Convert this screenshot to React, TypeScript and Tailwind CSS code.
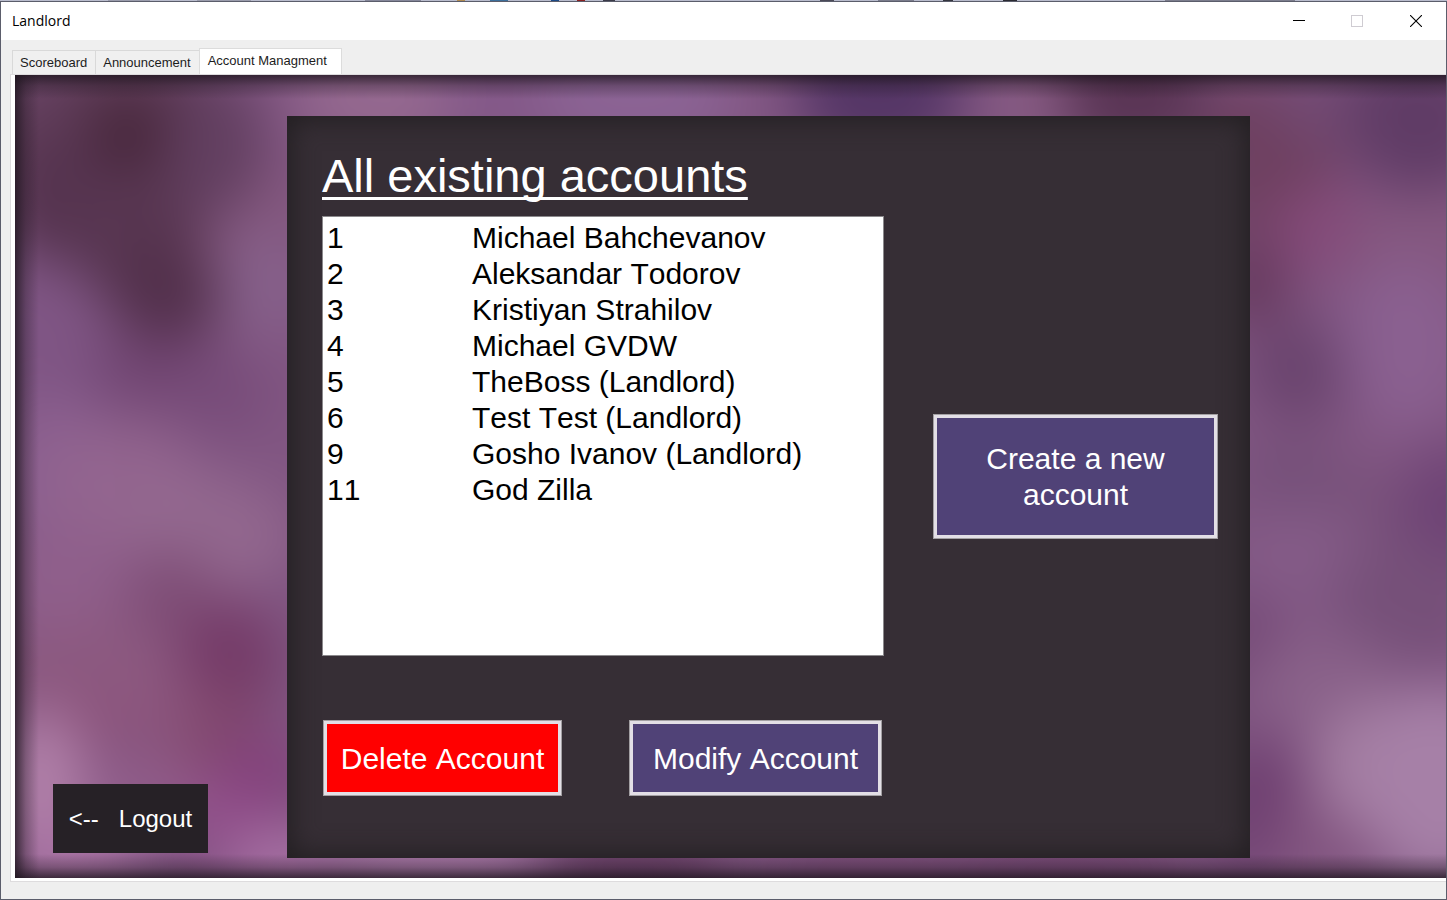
import React, { useState } from "react";

type Account = { id: number; name: string };

const accounts: Account[] = [
  { id: 1, name: "Michael Bahchevanov" },
  { id: 2, name: "Aleksandar Todorov" },
  { id: 3, name: "Kristiyan Strahilov" },
  { id: 4, name: "Michael GVDW" },
  { id: 5, name: "TheBoss (Landlord)" },
  { id: 6, name: "Test Test (Landlord)" },
  { id: 9, name: "Gosho Ivanov (Landlord)" },
  { id: 11, name: "God Zilla" },
];

const tabs = ["Scoreboard", "Announcement", "Account Managment"];

// cx, cy, rx, ry, fill, opacity
type Blob = [number, number, number, number, string, number];

const blobs: Blob[] = [
  [40, 270, 60, 110, "#7f5584", 1],
  [40, 400, 60, 80, "#8c6090", 1],
  [110, 410, 80, 60, "#93668f", 0.9],
  [190, 460, 90, 60, "#93698f", 0.9],
  [60, 510, 80, 60, "#8f5f8b", 1],
  [100, 600, 120, 60, "#8c5980", 1],
  [240, 140, 60, 60, "#84587f", 1],
  [250, 210, 50, 50, "#86608a", 1],
  [100, 50, 140, 75, "#5a3852", 1],
  [200, 70, 50, 70, "#623f60", 1],
  [65, 125, 90, 65, "#563450", 1],
  [20, 20, 40, 40, "#64405f", 1],
  [115, 60, 40, 30, "#452538", 1],
  [125, 170, 65, 65, "#583651", 1],
  [150, 220, 55, 50, "#52304b", 1],
  [150, 295, 75, 35, "#6f4470", 0.9],
  [205, 320, 50, 40, "#774b79", 0.9],
  [155, 520, 45, 45, "#7d4c74", 0.9],
  [215, 585, 50, 60, "#753b68", 1],
  [200, 660, 50, 50, "#80476c", 1],
  [100, 645, 90, 30, "#8c557d", 1],
  [245, 700, 45, 45, "#84427c", 1],
  [140, 715, 70, 25, "#98608e", 0.8],
  [25, 715, 45, 80, "#b180a9", 1],
  [60, 790, 70, 40, "#a872a3", 1],
  [205, 745, 45, 35, "#904e8a", 1],
  [270, 790, 60, 40, "#a66fa3", 1],
  [420, 795, 110, 45, "#a878a6", 1],
  [620, 795, 90, 45, "#6a4067", 1],
  [850, 795, 100, 45, "#7b4d79", 1],
  [1050, 795, 120, 45, "#754873", 0.9],
  [370, 20, 90, 60, "#94688f", 1],
  [480, 20, 60, 60, "#83598a", 0.8],
  [620, 20, 100, 60, "#8b6394", 1],
  [865, 15, 85, 70, "#553666", 1],
  [1022, 25, 50, 60, "#865a82", 1],
  [1120, 15, 75, 70, "#5a3555", 1],
  [1255, 85, 70, 90, "#6e4060", 1],
  [1315, 20, 60, 45, "#744b75", 1],
  [1405, 45, 75, 75, "#603c66", 1],
  [1310, 155, 55, 45, "#844a79", 1],
  [1235, 210, 40, 40, "#65385c", 1],
  [1400, 175, 70, 60, "#84577f", 1],
  [1285, 295, 55, 50, "#6a446e", 1],
  [1390, 270, 65, 85, "#8a6090", 1],
  [1275, 400, 50, 40, "#735078", 0.9],
  [1345, 435, 40, 40, "#755076", 0.7],
  [1435, 440, 50, 70, "#6e4375", 1],
  [1290, 490, 70, 60, "#845c87", 0.9],
  [1235, 575, 35, 60, "#704673", 0.8],
  [1390, 530, 75, 65, "#765079", 1],
  [1310, 610, 80, 50, "#896189", 1],
  [1245, 735, 45, 70, "#6e3f70", 1],
  [1310, 770, 60, 50, "#835681", 0.8],
  [1360, 690, 65, 65, "#a27ca0", 1],
  [1425, 710, 80, 100, "#a680a7", 1],
];

function Backdrop() {
  return (
    <svg
      aria-hidden="true"
      className="absolute inset-0 h-full w-full"
      viewBox="0 0 1431 803"
      preserveAspectRatio="none"
    >
      <defs>
        <filter
          id="soft"
          filterUnits="userSpaceOnUse"
          x="-100"
          y="-100"
          width="1631"
          height="1003"
          colorInterpolationFilters="sRGB"
        >
          <feGaussianBlur stdDeviation="27" />
        </filter>
        <linearGradient id="edgeTop" x1="0" y1="0" x2="0" y2="1">
          <stop offset="0" stopColor="#1c141c" stopOpacity="0.75" />
          <stop offset="0.45" stopColor="#1c141c" stopOpacity="0.3" />
          <stop offset="1" stopColor="#1c141c" stopOpacity="0" />
        </linearGradient>
        <linearGradient id="edgeBottom" x1="0" y1="1" x2="0" y2="0">
          <stop offset="0" stopColor="#1c141c" stopOpacity="0.75" />
          <stop offset="0.45" stopColor="#1c141c" stopOpacity="0.3" />
          <stop offset="1" stopColor="#1c141c" stopOpacity="0" />
        </linearGradient>
        <linearGradient id="edgeLeft" x1="0" y1="0" x2="1" y2="0">
          <stop offset="0" stopColor="#1c141c" stopOpacity="0.75" />
          <stop offset="0.45" stopColor="#1c141c" stopOpacity="0.3" />
          <stop offset="1" stopColor="#1c141c" stopOpacity="0" />
        </linearGradient>
      </defs>
      <g filter="url(#soft)">
        <rect x="-100" y="-100" width="1631" height="1003" fill="#815682" />
        {blobs.map(([cx, cy, rx, ry, fill, opacity], i) => (
          <ellipse
            key={i}
            cx={cx}
            cy={cy}
            rx={rx}
            ry={ry}
            fill={fill}
            opacity={opacity}
          />
        ))}
      </g>
      <rect width="1431" height="24" fill="url(#edgeTop)" />
      <rect y="779" width="1431" height="24" fill="url(#edgeBottom)" />
      <rect width="24" height="803" fill="url(#edgeLeft)" />
    </svg>
  );
}

// Sliver of the application window lying behind this one.
function BehindStrip() {
  const marks: [number, number, string][] = [
    [108, 42, "#9a9cac"],
    [197, 54, "#9a9cac"],
    [365, 56, "#85879a"],
    [457, 8, "#b08a50"],
    [490, 18, "#3c6f9b"],
    [551, 8, "#1b4a86"],
    [577, 8, "#8a2020"],
    [603, 12, "#3a3a48"],
    [820, 14, "#4a4a58"],
    [878, 36, "#7a7c8c"],
    [943, 10, "#33343e"],
    [1003, 14, "#2a2a32"],
    [1165, 130, "#7c7d8d"],
  ];
  return (
    <svg aria-hidden="true" className="block h-px w-full bg-[#b9bccd]">
      {marks.map(([x, w, fill]) => (
        <rect key={x} x={x} width={w} height="1" fill={fill} />
      ))}
    </svg>
  );
}

function ActionButton({
  className,
  children,
}: {
  className: string;
  children: React.ReactNode;
}) {
  return (
    <button
      type="button"
      className={`border border-[#a3a0a3] pt-px text-[30px] leading-9 text-white ring-3 ring-inset ring-[#e3dfe6] ${className}`}
    >
      {children}
    </button>
  );
}

export default function App() {
  const [activeTab, setActiveTab] = useState("Account Managment");

  return (
    <div className="flex min-h-screen flex-col bg-[#b9bccd] font-['Liberation_Sans',Arial,sans-serif] [font-kerning:none]">
      <BehindStrip />
      <div className="flex flex-1 flex-col border border-[#5b5d6b] bg-[#efefef]">
        <header className="flex h-[38px] items-center bg-white pl-[11px]">
          <h1 className="flex-1 font-['Open_Sans',sans-serif] text-sm text-black">
            Landlord
          </h1>
          <button
            type="button"
            aria-label="Minimize"
            className="flex h-full w-[58px] items-center justify-center"
          >
            <svg width="12" height="12" shapeRendering="crispEdges">
              <rect y="5" width="12" height="1" fill="#000" />
            </svg>
          </button>
          <button
            type="button"
            aria-label="Maximize"
            disabled
            className="flex h-full w-[58px] items-center justify-center"
          >
            <svg width="12" height="12" fill="none">
              <rect x="0.5" y="0.5" width="11" height="11" stroke="#cfccd2" />
            </svg>
          </button>
          <button
            type="button"
            aria-label="Close"
            className="flex h-full w-[60px] items-center justify-center"
          >
            <svg width="12" height="12" fill="none">
              <path d="M0 0 L12 12 M12 0 L0 12" stroke="#000" strokeWidth="1.1" />
            </svg>
          </button>
        </header>

        <div role="tablist" className="flex h-[34px] items-end pl-[11px]">
          {tabs.map((tab) => (
            <button
              key={tab}
              type="button"
              role="tab"
              aria-selected={tab === activeTab}
              onClick={() => setActiveTab(tab)}
              className={
                tab === activeTab
                  ? "h-[26px] border border-b-0 border-[#dcdcdc] bg-white pr-[14px] pb-[2px] pl-2 text-[13px] text-[#1c1c1c]"
                  : "h-[24px] border border-r-0 border-b-0 border-[#d9d9d9] bg-[#f0f0f0] pr-2 pl-[7px] text-[13px] text-[#1c1c1c]"
              }
            >
              {tab}
            </button>
          ))}
        </div>

        <div className="mb-[17px] ml-[9px] flex flex-1 flex-col border border-r-0 border-[#dedcde] bg-white pb-[3px] pl-1">
          <main className="relative grid flex-1 grid-cols-[272px_minmax(0,1fr)_196px] overflow-hidden pt-[41px] pb-5">
            <Backdrop />
            <div className="relative flex items-end pb-[5px] pl-[38px]">
              <button
                type="button"
                className="h-[69px] w-[155px] bg-[#262126] text-2xl whitespace-pre text-white"
              >
                {"<--   Logout"}
              </button>
            </div>

            <section className="relative grid grid-cols-[minmax(0,1fr)_285px] content-start gap-x-[49px] bg-[#362e35] pt-[33px] pr-8 pl-[35px] shadow-[inset_0_0_26px_4px_#231f22]">
              <div>
                <h2 className="text-[47px] leading-[54px] whitespace-nowrap text-white underline decoration-[3px] underline-offset-[5px] [text-decoration-skip-ink:none]">
                  All existing accounts
                </h2>
                <div className="mt-[13px] h-[440px] border border-[#8b898c] bg-white pt-[3px] pl-1">
                  <table className="w-full text-left text-[30px] leading-9 text-black">
                    <tbody>
                      {accounts.map((account) => (
                        <tr key={account.id}>
                          <td className="w-[145px] p-0">{account.id}</td>
                          <td className="p-0 whitespace-nowrap">{account.name}</td>
                        </tr>
                      ))}
                    </tbody>
                  </table>
                </div>
                <div className="mt-16 flex justify-between pr-[2px] pl-px">
                  <ActionButton className="h-[76px] w-[239px] bg-[#ff0000]">
                    Delete Account
                  </ActionButton>
                  <ActionButton className="h-[76px] w-[253px] bg-[#504277]">
                    Modify Account
                  </ActionButton>
                </div>
              </div>
              <div className="flex items-center pt-2">
                <ActionButton className="h-[125px] w-full bg-[#504277] px-10">
                  Create a new account
                </ActionButton>
              </div>
            </section>
          </main>
        </div>
      </div>
    </div>
  );
}
